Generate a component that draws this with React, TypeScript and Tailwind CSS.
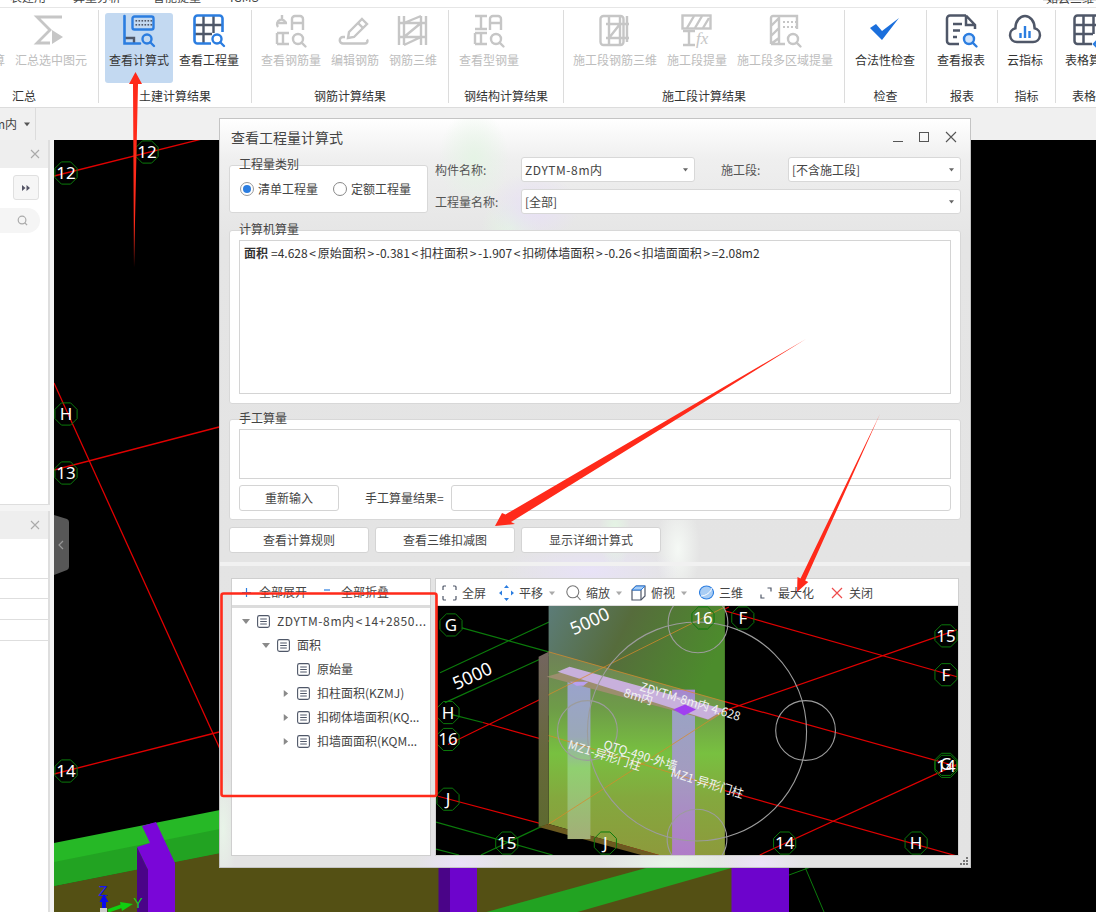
import React from "react";

const BLUE = "#2b7de0";
const DARK = "#4f5768";
const GREY = "#c6c6c6";

function Mag({ cx = 24, cy = 25, c = BLUE, r = 4.5, fill = "none" }: { cx?: number; cy?: number; c?: string; r?: number; fill?: string }) {
  return (
    <g>
      <circle cx={cx} cy={cy} r={r} fill={fill} stroke={c} strokeWidth="2.4" />
      <path d={`M${cx + r * 0.72} ${cy + r * 0.72}L${cx + r + 2.5} ${cy + r + 2.5}`} stroke={c} strokeWidth="2.4" strokeLinecap="round" />
    </g>
  );
}

function Ico({ children }: { children: React.ReactNode }) {
  return (
    <svg width="32" height="32" viewBox="0 0 32 32" fill="none" strokeWidth="2.4" className="block shrink-0 overflow-visible">
      {children}
    </svg>
  );
}

const IconSigma = () => (
  <Ico>
    <path d="M27 3H2L15 16L2 29H15" stroke={GREY} strokeWidth="2.8" />
    <path d="M17 16L28 23L17 30Z" fill={GREY} />
  </Ico>
);
const IconCalc = () => (
  <Ico>
    <path d="M1.5 24H11V29" stroke={DARK} />
    <path d="M1.5 2V29.5H17" stroke={BLUE} strokeWidth="2.6" strokeLinecap="round" />
    <rect x="9.5" y="2.5" width="21" height="13" rx="2" stroke={BLUE} strokeWidth="2.4" />
    <g fill={DARK}>
      {[13, 16, 19, 22, 25, 28].map((x) => (
        <rect key={x} x={x - 0.5} y="6" width="1.6" height="1.6" />
      ))}
      {[13, 16, 19, 22, 25, 28].map((x) => (
        <rect key={x} x={x - 0.5} y="10" width="1.6" height="1.6" />
      ))}
    </g>
    <Mag />
  </Ico>
);
const IconGrid = () => (
  <Ico>
    <path d="M10.5 2V29M20.5 2V19M2 11H29M2 20H19" stroke={DARK} />
    <path d="M18 29.5H4.5a3 3 0 0 1-3-3V4.5a3 3 0 0 1 3-3H26.5a3 3 0 0 1 3 3V18" stroke={BLUE} strokeWidth="2.6" />
    <Mag />
  </Ico>
);
const IconRebar = () => (
  <Ico>
    <g stroke={GREY}>
      <path d="M7 1V5M3 13A4.5 4.5 0 1 1 11 10M2 9H12" />
      <path d="M17 16V5a3 3 0 0 1 3-3h5a3 3 0 0 1 3 3V16M17 9H28" />
      <path d="M2 19H14M8 19V30M2 30H14M2 19V30" />
    </g>
    <Mag c={GREY} cx={23} r={5} />
  </Ico>
);
const IconPencil = () => (
  <Ico>
    <g stroke={GREY}>
      <path d="M23 5l5 5L15 23l-6 1 1-6Z" />
      <path d="M19 9l5 5" />
      <path d="M6 23H4a3 3 0 0 0 0 6.5H26a2.5 2.5 0 0 0 2-4" />
    </g>
  </Ico>
);
const IconRack = () => (
  <Ico>
    <path d="M2 2V31M7 2V31M24 2V31M29 2V31M2 9H29M2 23H29M7 9L24 2M7 23L24 9M7 31L24 23" stroke={GREY} />
  </Ico>
);
const IconSteel = () => (
  <Ico>
    <g stroke={GREY}>
      <path d="M2 2H14M8 2V15M2 15H14" />
      <path d="M17 16V5a3 3 0 0 1 3-3h5a3 3 0 0 1 3 3V16M17 9H28" />
      <path d="M2 19H14M8 19V30M2 30H14M2 19V30" />
    </g>
    <Mag c={GREY} cx={23} r={5} />
  </Ico>
);
const IconStageRebar = () => (
  <Ico>
    <rect x="1.5" y="2" width="23" height="29" rx="3" stroke={GREY} />
    <path d="M7 10H30M7 24H30M10 2V31M21 2V31M28 2V28M10 24L21 10" stroke={GREY} />
  </Ico>
);
const IconStageFx = () => (
  <Ico>
    <rect x="1.5" y="1.5" width="28" height="13" stroke={GREY} />
    <path d="M6 14L13 2M14 14L21 2M22 14L28 4M2 17H14M8 17V31M2 31H14" stroke={GREY} />
    <text x="15" y="30" fill={GREY} fontSize="17" fontStyle="italic" fontFamily="'Liberation Serif',serif">
      fx
    </text>
  </Ico>
);
const IconStageArea = () => (
  <Ico>
    <path d="M2 30V4a2 2 0 0 1 2-2H28V15M2 30H16M10 2V30M2 12L10 4M2 22L10 14M2 30L10 24" stroke={GREY} />
    <g fill={GREY}>
      {[14, 18, 22, 26].map((x) => (
        <rect key={x} x={x} y="7" width="2" height="2" />
      ))}
      {[14, 18, 22, 26].map((x) => (
        <rect key={x} x={x} y="12" width="2" height="2" />
      ))}
    </g>
    <Mag c={GREY} r={5} />
  </Ico>
);
const IconCheck = () => (
  <Ico>
    <polygon points="1,14 7,10 13,17 30,4 13,26" fill="#1b6fdc" />
  </Ico>
);
const IconReport = () => (
  <Ico>
    <path d="M21 1.5H5a3 3 0 0 0-3 3V27a3 3 0 0 0 3 3H14M21 1.5L30 11V15M21 2V11H30" stroke={DARK} strokeWidth="2.5" />
    <path d="M8 10H17M8 16.5H15M8 23H12" stroke={DARK} strokeWidth="2.5" />
    <Mag c={BLUE} r={5} fill="#d3e5fb" />
  </Ico>
);
const IconCloud = () => (
  <Ico>
    <path d="M8 28a7 7 0 0 1-1.6-13.8C6.4 7 11 2 16 2C21 2 25.6 7 25.6 14.2A7 7 0 0 1 24 28Z" stroke={DARK} strokeWidth="2.5" />
    <path d="M11.5 24V19M16 24V12M20.5 24V17" stroke={BLUE} strokeWidth="2.4" />
  </Ico>
);
const IconTable = () => (
  <Ico>
    <path d="M19 30H4.5a3 3 0 0 1-3-3V4.5a3 3 0 0 1 3-3H26.5a3 3 0 0 1 3 3V19M10.5 2V30M20.5 2V20M2 11H29M2 20H20" stroke={DARK} strokeWidth="2.5" />
    <path d="M21 30l8-8 2 2-8 8Z" stroke={BLUE} />
  </Ico>
);

function Item({ label, icon, off, active, pad }: { label: string; icon: React.ReactNode; off?: boolean; active?: boolean; pad?: boolean }) {
  return (
    <div className={`flex h-[70px] flex-col items-center rounded-[3px] pt-px ${pad ? "px-1" : ""} ${active ? "bg-[#c3d9f1]" : ""}`}>
      {icon}
      <span className={`mt-1.5 whitespace-nowrap text-xs leading-4 ${off ? "text-[#bdbdbd]" : "text-[#333]"}`}>{label}</span>
    </div>
  );
}

function Group({ width, pl, gap, label, children, last }: { width: string; pl: string; gap: string; label: string; children: React.ReactNode; last?: boolean }) {
  return (
    <div className={`mt-0.5 flex h-[93px] shrink-0 flex-col ${width} ${last ? "" : "border-r border-[#dcdcdc]"}`}>
      <div className={`mt-[3px] flex h-[70px] ${pl} ${gap}`}>{children}</div>
      <div className="mt-[5px] text-center text-xs leading-4 text-[#333]">{label}</div>
    </div>
  );
}

function Ribbon() {
  return (
    <div className="relative z-10 h-[108px] shrink-0 border-b border-[#dcdcdc] bg-white">
      <div className="flex h-2 overflow-hidden border-b border-[#e6e6e6] text-xs leading-4 text-[#444]">
        <div className="-mt-[11px] ml-2.5 flex">
          <span className="w-[63px]">表建用</span>
          <span className="w-[80px]">算量分析</span>
          <span className="w-[77px]">智能提量</span>
          <span>IGMS</span>
        </div>
        <div className="ml-auto -mt-[11px] h-3 w-[53px] border border-[#ddd] pl-0.5">如云三维显示</div>
      </div>
      <div className="flex">
        <div className="-ml-[50px] shrink-0">
          <Group width="w-[149px]" pl="pl-[7px]" gap="gap-2.5" label="汇总">
            <Item off label="汇总计算" icon={<div className="h-8" />} />
            <Item off label="汇总选中图元" icon={<IconSigma />} />
          </Group>
        </div>
        <Group width="w-[153px]" pl="pl-1.5" gap="gap-0.5" label="土建计算结果">
          <Item active pad label="查看计算式" icon={<IconCalc />} />
          <Item pad label="查看工程量" icon={<IconGrid />} />
        </Group>
        <Group width="w-[197px]" pl="pl-[9px]" gap="gap-2.5" label="钢筋计算结果">
          <Item off label="查看钢筋量" icon={<IconRebar />} />
          <Item off label="编辑钢筋" icon={<IconPencil />} />
          <Item off label="钢筋三维" icon={<IconRack />} />
        </Group>
        <Group width="w-[115px]" pl="pl-2.5" gap="gap-2.5" label="钢结构计算结果">
          <Item off label="查看型钢量" icon={<IconSteel />} />
        </Group>
        <Group width="w-[281px]" pl="pl-[9px]" gap="gap-2.5" label="施工段计算结果">
          <Item off label="施工段钢筋三维" icon={<IconStageRebar />} />
          <Item off label="施工段提量" icon={<IconStageFx />} />
          <Item off label="施工段多区域提量" icon={<IconStageArea />} />
        </Group>
        <Group width="w-[82px]" pl="pl-2.5" gap="gap-2.5" label="检查">
          <Item label="合法性检查" icon={<IconCheck />} />
        </Group>
        <Group width="w-[71px]" pl="pl-2.5" gap="gap-2.5" label="报表">
          <Item label="查看报表" icon={<IconReport />} />
        </Group>
        <Group width="w-[58px]" pl="pl-[9px]" gap="gap-2.5" label="指标">
          <Item label="云指标" icon={<IconCloud />} />
        </Group>
        <Group last width="w-[80px]" pl="pl-[9px]" gap="gap-2.5" label="表格算量">
          <Item label="表格算量" icon={<IconTable />} />
        </Group>
      </div>
    </div>
  );
}

function Caret({ dir = "down", c = "#555", s = 7 }: { dir?: "down" | "right"; c?: string; s?: number }) {
  return (
    <svg width={s} height={s} viewBox="0 0 8 8" className="block shrink-0">
      <path d={dir === "down" ? "M0 2H8L4 7Z" : "M2 0V8L7 4Z"} fill={c} />
    </svg>
  );
}

function XIcon({ s = 10, c = "#aaa" }: { s?: number; c?: string }) {
  return (
    <svg width={s} height={s} viewBox="0 0 10 10" className="block">
      <path d="M1 1L9 9M9 1L1 9" stroke={c} strokeWidth="1.1" />
    </svg>
  );
}

function LeftColumn() {
  return (
    <div className="flex w-[54px] shrink-0 flex-col bg-[#f4f4f4]">
      <div className="flex h-[365px] w-[50px] shrink-0 flex-col border-r-2 border-b border-[#dedede] bg-white">
        <div className="flex h-7 shrink-0 items-center justify-end bg-[#eeeeee] pr-2">
          <XIcon />
        </div>
        <div className="mt-[7px] ml-[13px] flex h-[25px] w-[26px] items-center justify-center rounded-[3px] border border-[#e0e0e0] bg-[#f6f6f6]">
          <svg width="8" height="6" viewBox="0 0 8 6">
            <path d="M0 0L3.5 3L0 6ZM4.5 0L8 3L4.5 6Z" fill="#556" />
          </svg>
        </div>
        <div className="mt-2 flex h-[25px] w-[40px] items-center justify-end rounded-r-full bg-[#f5f5f5] pr-3">
          <svg width="11" height="11" viewBox="0 0 12 12" fill="none">
            <circle cx="5.5" cy="5.5" r="4.2" stroke="#aaa" strokeWidth="1.3" />
            <path d="M8.5 8.5L11 11" stroke="#aaa" strokeWidth="1.3" />
          </svg>
        </div>
      </div>
      <div className="mt-1.5 flex w-[50px] flex-1 flex-col border-r-2 border-[#dedede] bg-white">
        <div className="flex h-7 shrink-0 items-center justify-end bg-[#eeeeee] pr-2">
          <XIcon />
        </div>
        <div className="mt-[39px] w-12 border-y border-[#dedede]">
          <div className="h-5 border-b border-[#dedede]" />
          <div className="h-5" />
        </div>
        <div className="mt-[20px] w-12 border-t border-[#dedede]" />
      </div>
    </div>
  );
}

function hexPoints(x: number, y: number, r = 12) {
  const pts: string[] = [];
  for (let i = 0; i < 8; i++) {
    const a = ((i + 0.5) * Math.PI) / 4;
    pts.push(`${(x + r * Math.cos(a)).toFixed(1)},${(y + r * Math.sin(a)).toFixed(1)}`);
  }
  return pts.join(" ");
}

function Hex({ x, y, t }: { x: number; y: number; t: string }) {
  return (
    <g>
      <polygon points={hexPoints(x, y)} fill="none" stroke="#0b7a0b" strokeWidth="1" />
      <text x={x} y={y + 6} textAnchor="middle" fontSize="17" fill="#fff" fontFamily="'Noto Sans',sans-serif">
        {t}
      </text>
    </g>
  );
}

function MainCanvas() {
  return (
    <svg viewBox="54 140 1042 772" width="1042" height="772" className="block bg-black">
      <path d="M54 176L218 135M54 470L219 427M54 383L225 760M54 774L219 732" stroke="#e00000" strokeWidth="1.3" fill="none" />
      <polygon points="54,886 219,853 789,740 789,912 54,912" fill="#545014" />
      <polygon points="54,843 230,808 230,851 54,886" fill="#26b826" />
      <polygon points="54,862 230,827 230,851 54,886" fill="#22a322" />
      <polygon points="486.5,912 646,868 731.5,868 577.5,912" fill="#22a322" />
      <polygon points="142,826 156,822 175,863 175,912 148,912 148,870 137,847 150,843" fill="#7a06d8" />
      <polygon points="137,847 148,870 148,912 137,912" fill="#4a0488" />
      <rect x="438.5" y="860" width="11.5" height="52" fill="#4a0488" />
      <rect x="450" y="860" width="27" height="52" fill="#6d04cc" />
      <rect x="731.5" y="860" width="57.5" height="52" fill="#6d04cc" />
      <path d="M789 875L830 860M802 860L824 912" stroke="#0b7a0b" strokeWidth="1" />
      <Hex x={66} y={173} t="12" />
      <Hex x={147} y={152} t="12" />
      <Hex x={66} y={414} t="H" />
      <Hex x={66} y={473} t="13" />
      <Hex x={66} y={771} t="14" />
      <path d="M54 515L67 519Q69 520 69 522V567Q69 569 67 570L54 575Z" fill="#575757" />
      <path d="M63 541L59 545L63 549" stroke="#999" strokeWidth="1.2" fill="none" />
      <text x="103" y="896" textAnchor="middle" fontSize="15" fill="#1414ff" fontFamily="'Liberation Sans',sans-serif">
        Z
      </text>
      <path d="M104 894L108.5 902H106V909H102V902H99.5Z" fill="#0a0aee" />
      <rect x="100" y="908" width="7" height="4" fill="#ccc" />
      <path d="M108 911L122 906" stroke="#10d010" strokeWidth="3.5" />
      <polygon points="120,902 133,904 122,911" fill="#10d010" />
      <text x="138" y="908" textAnchor="middle" fontSize="14" fill="#18d018" fontFamily="'Liberation Sans',sans-serif">
        Y
      </text>
    </svg>
  );
}

function Doc() {
  return (
    <svg width="13" height="13" viewBox="0 0 13 13" fill="none" className="block shrink-0">
      <rect x="0.6" y="0.6" width="11.8" height="11.8" rx="1.8" stroke={DARK} strokeWidth="1.1" />
      <path d="M3.2 4H9.8M3.2 6.5H9.8M3.2 9H9.8" stroke={DARK} strokeWidth="1" />
    </svg>
  );
}

function TreeRow({ level, caret, children }: { level: number; caret?: "down" | "right"; children: React.ReactNode }) {
  return (
    <div className={`flex h-6 items-center ${level === 0 ? "pl-[10px]" : level === 1 ? "pl-[30px]" : "pl-[50px]"}`}>
      <div className="flex w-[15px] shrink-0 items-center">{caret && <Caret dir={caret} c="#8a8a8a" s={caret === "down" ? 8 : 7} />}</div>
      <Doc />
      <span className="ml-[7px] whitespace-nowrap text-xs text-[#444]">{children}</span>
    </div>
  );
}

function Legend({ children }: { children: React.ReactNode }) {
  return <span className="absolute -top-2.5 left-[9px] text-xs leading-4 text-[#444]">{children}</span>;
}

function Select({ w, children }: { w: string; children: React.ReactNode }) {
  return (
    <div className={`flex h-[25px] items-center justify-between rounded-[3px] border border-[#d8d8d8] bg-white pl-[3px] pr-1.5 text-xs text-[#444] ${w}`}>
      <span>{children}</span>
      <Caret s={5} c="#666" />
    </div>
  );
}

function Btn({ w, children }: { w: string; children: React.ReactNode }) {
  return <div className={`flex h-[26px] items-center justify-center rounded-[3px] border border-[#d4d4d4] bg-white text-xs text-[#444] ${w}`}>{children}</div>;
}

function Lt() {
  return <span className="mx-[1.7px]">&lt;</span>;
}
function Gt() {
  return <span className="mx-[1.7px]">&gt;</span>;
}

function SmallCanvas() {
  const wall = "548,652 725,702 725,856 659,856 548,825";
  return (
    <svg viewBox="436 606 522 250" width="522" height="250" className="block bg-black">
      <defs>
        <linearGradient id="wallG" x1="0" y1="0" x2="0" y2="1">
          <stop offset="0" stopColor="#6f8058" />
          <stop offset="0.28" stopColor="#6e9c48" />
          <stop offset="0.5" stopColor="#78c040" />
          <stop offset="0.72" stopColor="#84a83e" />
          <stop offset="1" stopColor="#8d9a3c" />
        </linearGradient>
        <linearGradient id="backG" x1="0" y1="0" x2="1" y2="0.3">
          <stop offset="0" stopColor="#5c7c78" />
          <stop offset="0.45" stopColor="#566c3c" />
          <stop offset="1" stopColor="#4c8c2c" />
        </linearGradient>
        <linearGradient id="sideG" x1="0" y1="0" x2="0" y2="1">
          <stop offset="0" stopColor="#73655f" />
          <stop offset="0.6" stopColor="#66683a" />
          <stop offset="1" stopColor="#5e6a30" />
        </linearGradient>
        <linearGradient id="col1G" x1="0" y1="0" x2="0" y2="1">
          <stop offset="0" stopColor="#9aa3cc" />
          <stop offset="0.35" stopColor="#9aa8b8" />
          <stop offset="0.55" stopColor="#90d070" />
          <stop offset="1" stopColor="#a3ae78" />
        </linearGradient>
        <linearGradient id="col2G" x1="0" y1="0" x2="0" y2="1">
          <stop offset="0" stopColor="#a884d0" />
          <stop offset="0.12" stopColor="#9aa3c4" />
          <stop offset="0.5" stopColor="#a39cc0" />
          <stop offset="1" stopColor="#b07cc8" />
        </linearGradient>
      </defs>
      <g fill="none" strokeWidth="1.2">
        <path d="M461 628L548 652M451 715L482 723M435 823L552 856M435 850L458 856M439 673L583 606M444 703L656 606M480 856L548 824" stroke="#0b7a0b" />
        <path d="M715 608L958 677M725 702L958 767M482 723L958 857M437 797L659 856M447 745L729 607M725 711L958 630M760 856L958 765" stroke="#e00000" />
      </g>
      <rect x="548" y="606" width="177" height="110" fill="url(#backG)" />
      <polygon points={wall} fill="url(#wallG)" />
      <polygon points="538,657 548,652 548,825 538,828" fill="url(#sideG)" />
      <polygon points="538,828 548,825 659,856 641,856" fill="#6b5a20" />
      <rect x="567" y="682" width="23" height="158" fill="url(#col1G)" />
      <rect x="672" y="690" width="23" height="166" fill="url(#col2G)" />
      <polygon points="546,677 563,672 725,712 711,721" fill="#9c8e6e" />
      <polygon points="557,672 569,667 725,710 708,720" fill="#c8b0dc" />
      <polygon points="569,682 588,682 583,686 576,686" fill="#b8a0f0" />
      <polygon points="673,710 685,705 696,710 684,716" fill="#a040f0" />
      <path d="M548 652L725 702M548 736L725 790M548 695L725 607M548 825L725 711" stroke="#d9892a" strokeWidth="1" fill="none" opacity="0.75" />
      <g fill="none" stroke="#9c9c9c" strokeWidth="1.1">
        <circle cx="697" cy="732" r="110" />
        <circle cx="698" cy="623" r="30" />
        <circle cx="587" cy="731" r="30" />
        <circle cx="806" cy="731" r="30" />
        <circle cx="697" cy="840" r="30" />
      </g>
      <g fill="#fff" fontFamily="'Noto Sans',sans-serif" textAnchor="middle">
        <text transform="translate(474 682) rotate(-25)" fontSize="18">5000</text>
        <text transform="translate(592 627) rotate(-25)" fontSize="18">5000</text>
      </g>
      <g fill="#f2f2f2" fontSize="12" fontFamily="'Noto Sans CJK SC',sans-serif" textAnchor="middle">
        <text transform="translate(689 706) rotate(17)">ZDYTM-8m内 4.628</text>
        <text transform="translate(637 701) rotate(17)">8m内</text>
        <text transform="translate(639 760) rotate(17)">QTQ-490-外墙</text>
        <text transform="translate(603 760) rotate(17)">MZ1-异形门柱</text>
        <text transform="translate(706 788) rotate(17)">MZ1-异形门柱</text>
      </g>
      <Hex x={450} y={625} t="G" />
      <Hex x={447} y={713} t="H" />
      <Hex x={447} y={740} t="16" />
      <Hex x={447} y={800} t="J" />
      <Hex x={506} y={844} t="15" />
      <Hex x={605} y={844} t="J" />
      <Hex x={785} y={844} t="14" />
      <Hex x={917} y={844} t="H" />
      <Hex x={703} y={618} t="16" />
      <Hex x={743} y={618} t="F" />
      <Hex x={947} y={636} t="15" />
      <Hex x={947} y={675} t="F" />
      <Hex x={947} y={765} t="G" />
      <Hex x={947} y={767} t="14" />
    </svg>
  );
}

function ToolBar() {
  return (
    <div className="flex h-[27px] shrink-0 items-center border-b border-[#ddd] bg-white pl-1.5 pt-px text-xs text-[#444]">
      <svg width="15" height="16" viewBox="0 0 15 16" fill="none" className="shrink-0">
        <path d="M1 5V2a1 1 0 0 1 1-1H4M11 1H13a1 1 0 0 1 1 1V5M14 11V14a1 1 0 0 1-1 1H11M4 15H2a1 1 0 0 1-1-1V11" stroke={DARK} strokeWidth="1.2" />
      </svg>
      <span className="ml-[5px]">全屏</span>
      <svg width="15" height="16" viewBox="0 0 15 16" fill={BLUE} className="ml-[13px] shrink-0">
        <path d="M7.5 0L10 3H5ZM7.5 16L5 13H10ZM0 8L3 5.5V10.5ZM15 8L12 10.5V5.5Z" />
      </svg>
      <span className="ml-[5px]">平移</span>
      <span className="ml-1.5">
        <Caret s={6} c="#aaa" />
      </span>
      <svg width="15" height="16" viewBox="0 0 15 16" fill="none" className="ml-[11px] shrink-0">
        <circle cx="6.8" cy="6.8" r="6" stroke="#777" strokeWidth="1.1" />
        <path d="M11 11L14.5 15" stroke="#777" strokeWidth="1.1" />
      </svg>
      <span className="ml-[5px]">缩放</span>
      <span className="ml-1.5">
        <Caret s={6} c="#aaa" />
      </span>
      <svg width="15" height="16" viewBox="0 0 15 16" fill="none" className="ml-[9px] shrink-0">
        <path d="M1 5L5 1H14V11L10 15H1Z" stroke={DARK} strokeWidth="1.2" />
        <path d="M1 5H10V15" stroke={DARK} strokeWidth="1.2" />
        <path d="M1 5L5 1H14L10 5Z" fill="#a8cdf5" stroke={BLUE} strokeWidth="1" />
      </svg>
      <span className="ml-[5px]">俯视</span>
      <span className="ml-1.5">
        <Caret s={6} c="#aaa" />
      </span>
      <svg width="15" height="15" viewBox="0 0 15 15" fill="none" className="ml-3 shrink-0">
        <ellipse cx="7.5" cy="7.5" rx="7" ry="6.5" fill="#a9cdf4" stroke={BLUE} strokeWidth="1.1" />
        <path d="M2 11C7 11 12 7 13 3" stroke="#fff" strokeWidth="1" />
      </svg>
      <span className="ml-[5px]">三维</span>
      <svg width="12" height="12" viewBox="0 0 12 12" fill="none" className="ml-[17px] shrink-0">
        <path d="M7.5 1H11V4.5M1 7.5V11H4.5" stroke={DARK} strokeWidth="1.2" />
      </svg>
      <span className="ml-1.5">最大化</span>
      <svg width="12" height="12" viewBox="0 0 12 12" fill="none" className="ml-[17px] shrink-0">
        <path d="M1 1L11 11M11 1L1 11" stroke="#ee4b4b" strokeWidth="1.2" />
      </svg>
      <span className="ml-1.5">关闭</span>
    </div>
  );
}

function Dialog() {
  return (
    <div className="absolute left-[219px] top-[118px] z-20 flex h-[750px] w-[752px] flex-col border border-[#c4c4c4] bg-[radial-gradient(ellipse_35px_50px_at_254px_40px,rgba(228,244,228,0.9),transparent),radial-gradient(ellipse_45px_35px_at_314px_88px,rgba(232,224,246,0.95),transparent),radial-gradient(ellipse_30px_30px_at_291px_108px,rgba(228,244,228,0.9),transparent),radial-gradient(ellipse_16px_40px_at_395px_412px,rgba(228,246,228,0.95),transparent),radial-gradient(ellipse_90px_30px_at_370px_452px,rgba(232,226,248,0.95),transparent),radial-gradient(ellipse_22px_50px_at_458px_430px,rgba(246,250,246,0.95),transparent),radial-gradient(ellipse_45px_22px_at_240px_745px,rgba(234,226,248,1),transparent),radial-gradient(ellipse_70px_22px_at_450px_745px,rgba(232,244,232,1),transparent),radial-gradient(ellipse_45px_22px_at_540px_745px,rgba(236,228,248,1),transparent),radial-gradient(ellipse_14px_60px_at_3px_710px,rgba(232,244,232,1),transparent),linear-gradient(180deg,#fff_0px,#efefef_40px,#e5e5e5_120px,#e3e3e3_100%)]">
      <div className="flex h-[38px] shrink-0 items-center pb-0.5 pl-[11px] pr-[13px] text-sm text-[#444]">
        <span>查看工程量计算式</span>
        <div className="ml-auto flex items-center gap-[16px]">
          <div className="mt-[9px] h-px w-[10px] bg-[#555]" />
          <div className="h-[10px] w-[10px] border border-[#555]" />
          <svg width="12" height="12" viewBox="0 0 12 12">
            <path d="M1 1L11 11M11 1L1 11" stroke="#555" strokeWidth="1.1" />
          </svg>
        </div>
      </div>
      <div className="flex shrink-0 pl-[9px]">
        <div className="relative mt-2 flex h-12 w-[199px] items-center rounded-[3px] border border-[#d8d8d8] bg-white pl-2.5 text-xs text-[#444]">
          <Legend>工程量类别</Legend>
          <div className="flex h-3.5 w-3.5 items-center justify-center rounded-full border border-[#999] bg-white">
            <div className="h-2 w-2 rounded-full bg-[#2b7de0]" />
          </div>
          <span className="ml-1">清单工程量</span>
          <div className="ml-[15px] h-3.5 w-3.5 rounded-full border border-[#888] bg-white" />
          <span className="ml-1">定额工程量</span>
        </div>
        <div className="ml-[7px] flex flex-col gap-[7px]">
          <div className="flex h-[25px] items-center text-xs text-[#555]">
            <span className="w-[86px]">构件名称:</span>
            <Select w="w-[174px]">
              <span className="tracking-[0.6px]">ZDYTM-8m</span>内
            </Select>
            <span className="ml-[26px] w-[67px]">施工段:</span>
            <Select w="w-[173px]">[不含施工段]</Select>
          </div>
          <div className="flex h-[25px] items-center text-xs text-[#555]">
            <span className="w-[86px]">工程量名称:</span>
            <Select w="w-[440px]">[全部]</Select>
          </div>
        </div>
      </div>
      <div className="relative ml-[9px] mt-4 h-[174px] w-[732px] shrink-0 rounded-[3px] border border-[#d8d8d8] bg-white p-[9px]">
        <Legend>计算机算量</Legend>
        <div className="h-[154px] border border-[#d4d4d4] bg-white px-1 pt-0.5 text-xs leading-5 text-[#333]">
          <b className="font-bold">面积</b>
          <span className="ml-[3px]">=4.628</span>
          <Lt />原始面积
          <Gt />-0.381
          <Lt />扣柱面积
          <Gt />-1.907
          <Lt />扣砌体墙面积
          <Gt />-0.26
          <Lt />扣墙面面积
          <Gt />=2.08m2
        </div>
      </div>
      <div className="relative ml-[9px] mt-[15px] h-[101px] w-[732px] shrink-0 rounded-[3px] border border-[#d8d8d8] bg-white p-[9px]">
        <Legend>手工算量</Legend>
        <div className="h-[50px] border border-[#d4d4d4] bg-white" />
        <div className="mt-1.5 flex items-center">
          <Btn w="w-[100px]">重新输入</Btn>
          <span className="ml-[26px] w-[86px] text-xs text-[#444]">手工算量结果=</span>
          <div className="h-[26px] flex-1 rounded-[3px] border border-[#d4d4d4] bg-white" />
        </div>
      </div>
      <div className="ml-[9px] mt-[7px] flex shrink-0 gap-1.5">
        <Btn w="w-[140px]">查看计算规则</Btn>
        <Btn w="w-[140px]">查看三维扣减图</Btn>
        <Btn w="w-[140px]">显示详细计算式</Btn>
      </div>
      <div className="mt-[9px] h-1 shrink-0 bg-[#f1f1f1]" />
      <div className="ml-[11px] mt-3 flex h-[278px] shrink-0 gap-1">
        <div className="flex w-[200px] flex-col overflow-hidden border border-[#cfcfcf] bg-white">
          <div className="flex h-[29px] shrink-0 items-center border-b-[3px] border-[#dcdcdc] pl-2.5 text-xs text-[#444]">
            <svg width="9" height="9" viewBox="0 0 9 9" className="shrink-0">
              <path d="M4.5 0V9M0 4.5H9" stroke={BLUE} strokeWidth="1.2" />
            </svg>
            <span className="ml-2">全部展开</span>
            <svg width="9" height="9" viewBox="0 0 9 9" className="ml-[17px] shrink-0">
              <path d="M0 2H6" stroke={BLUE} strokeWidth="1.2" />
            </svg>
            <span className="ml-2">全部折叠</span>
          </div>
          <div className="pt-px">
            <TreeRow level={0} caret="down">
              <span className="tracking-[0.6px]">ZDYTM-8m</span>内<Lt />
              <span className="tracking-[0.6px]">14+2850...</span>
            </TreeRow>
            <TreeRow level={1} caret="down">面积</TreeRow>
            <TreeRow level={2}>原始量</TreeRow>
            <TreeRow level={2} caret="right">扣柱面积(KZMJ)</TreeRow>
            <TreeRow level={2} caret="right">扣砌体墙面积(KQ...</TreeRow>
            <TreeRow level={2} caret="right">扣墙面面积(KQM...</TreeRow>
          </div>
        </div>
        <div className="flex w-[524px] flex-col border border-[#cfcfcf] bg-white">
          <ToolBar />
          <SmallCanvas />
        </div>
      </div>
      <div className="mt-auto flex justify-end pb-px pr-px">
        <svg width="9" height="9" viewBox="0 0 9 9" fill="#777">
          <rect x="6" y="0" width="2" height="2" />
          <rect x="3" y="3" width="2" height="2" />
          <rect x="6" y="3" width="2" height="2" />
          <rect x="0" y="6" width="2" height="2" />
          <rect x="3" y="6" width="2" height="2" />
          <rect x="6" y="6" width="2" height="2" />
        </svg>
      </div>
    </div>
  );
}

function Annotations() {
  return (
    <svg viewBox="0 0 1096 912" width="1096" height="912" className="pointer-events-none absolute left-0 top-0 z-30">
      <polygon points="135.5,72 142,84 138,84 134,268 133,84 129,84" fill="#ff2a1a" />
      <polygon points="495,526 502,513 505.5,514.5 806,339 511,522 515,524" fill="#ff2a1a" />
      <polygon points="797,592 797.5,577 800.5,578.5 880,414 805.2,580.5 808.3,582" fill="#ff2a1a" />
      <rect x="221.5" y="593.5" width="215" height="202.5" rx="2" fill="none" stroke="#ff2a1a" strokeWidth="2.6" />
    </svg>
  );
}

export default function App() {
  return (
    <div className="relative flex h-[912px] w-[1096px] flex-col overflow-hidden bg-white text-xs [font-family:'Noto_Sans_CJK_SC',sans-serif]">
      <Ribbon />
      <div className="flex h-8 shrink-0 items-center bg-[#f0f0f0]">
        <div className="flex h-full w-9 items-center justify-end overflow-hidden border-r border-[#dcdcdc] pr-[5px] text-xs text-[#444]">
          <span className="whitespace-nowrap">m内</span>
          <span className="ml-[7px]">
            <Caret s={6} c="#555" />
          </span>
        </div>
      </div>
      <div className="flex min-h-0 flex-1">
        <LeftColumn />
        <div className="flex-1 overflow-hidden">
          <MainCanvas />
        </div>
      </div>
      <Dialog />
      <Annotations />
    </div>
  );
}
